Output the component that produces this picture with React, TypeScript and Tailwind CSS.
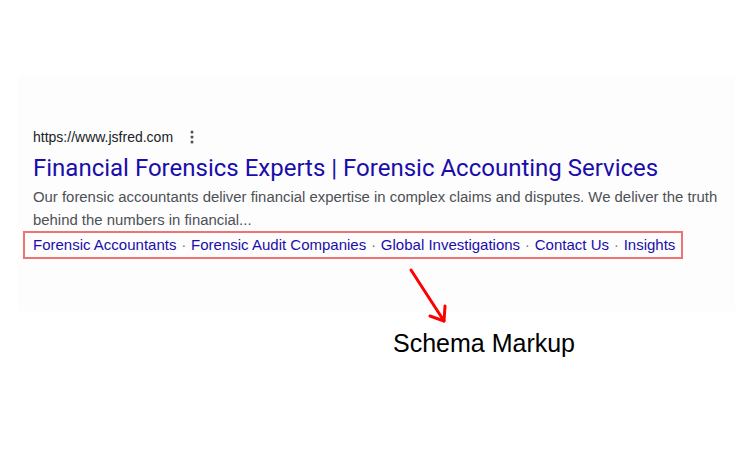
import React from "react";

const links = [
  "Forensic Accountants",
  "Forensic Audit Companies",
  "Global Investigations",
  "Contact Us",
  "Insights",
];

export default function App() {
  return (
    <div className="w-[750px] h-[450px] bg-white relative overflow-hidden" style={{ fontFamily: '"Liberation Sans", Arial, sans-serif' }}>
      <div className="absolute left-[18px] top-[75px] w-[717px] h-[236px] bg-[#fdfdfd]" />
      <div className="relative pt-[128px] pl-[33px]">
        <div className="flex items-center h-[18px]">
          <span className="text-[14px] text-[#202124] leading-[18px]">https://www.jsfred.com</span>
          <svg className="ml-[16px]" width="6" height="14" viewBox="0 0 6 14">
            <circle cx="3" cy="2" r="1.5" fill="#4d5156" />
            <circle cx="3" cy="7" r="1.5" fill="#4d5156" />
            <circle cx="3" cy="12" r="1.5" fill="#4d5156" />
          </svg>
        </div>
        <div className="mt-[6px] text-[24px] leading-[32px] text-[#1a0dab]" style={{ fontFamily: 'Roboto, "Noto Sans", sans-serif' }}>
          Financial Forensics Experts | Forensic Accounting Services
        </div>
        <div className="mt-[2px] text-[14.9px] leading-[23px] text-[#4d5156] w-[700px]">
          Our forensic accountants deliver financial expertise in complex claims and disputes. We deliver the truth behind the numbers in financial...
        </div>
      </div>
      <div className="relative ml-[23px] -mt-[1px] w-[660px] h-[28px] border-2 border-[#f07373] flex items-center pl-[8px]">
        {links.map((l, i) => (
          <React.Fragment key={l}>
            {i > 0 && <span className="text-[#70757a] text-[14px] mx-[5px]">·</span>}
            <span className="text-[15px] text-[#1a0dab] whitespace-nowrap">{l}</span>
          </React.Fragment>
        ))}
      </div>
      <svg className="absolute left-[400px] top-[264px]" width="60" height="66" viewBox="0 0 60 66">
        <path d="M11 6 L44 57" stroke="#ff0000" strokeWidth="3" strokeLinecap="round" fill="none" />
        <path d="M30 52 L44 57 L45 42" stroke="#ff0000" strokeWidth="3" strokeLinecap="round" strokeLinejoin="round" fill="none" />
      </svg>
      <div className="absolute left-[393px] top-[328px] text-[25px] leading-[30px] text-black">Schema Markup</div>
    </div>
  );
}
